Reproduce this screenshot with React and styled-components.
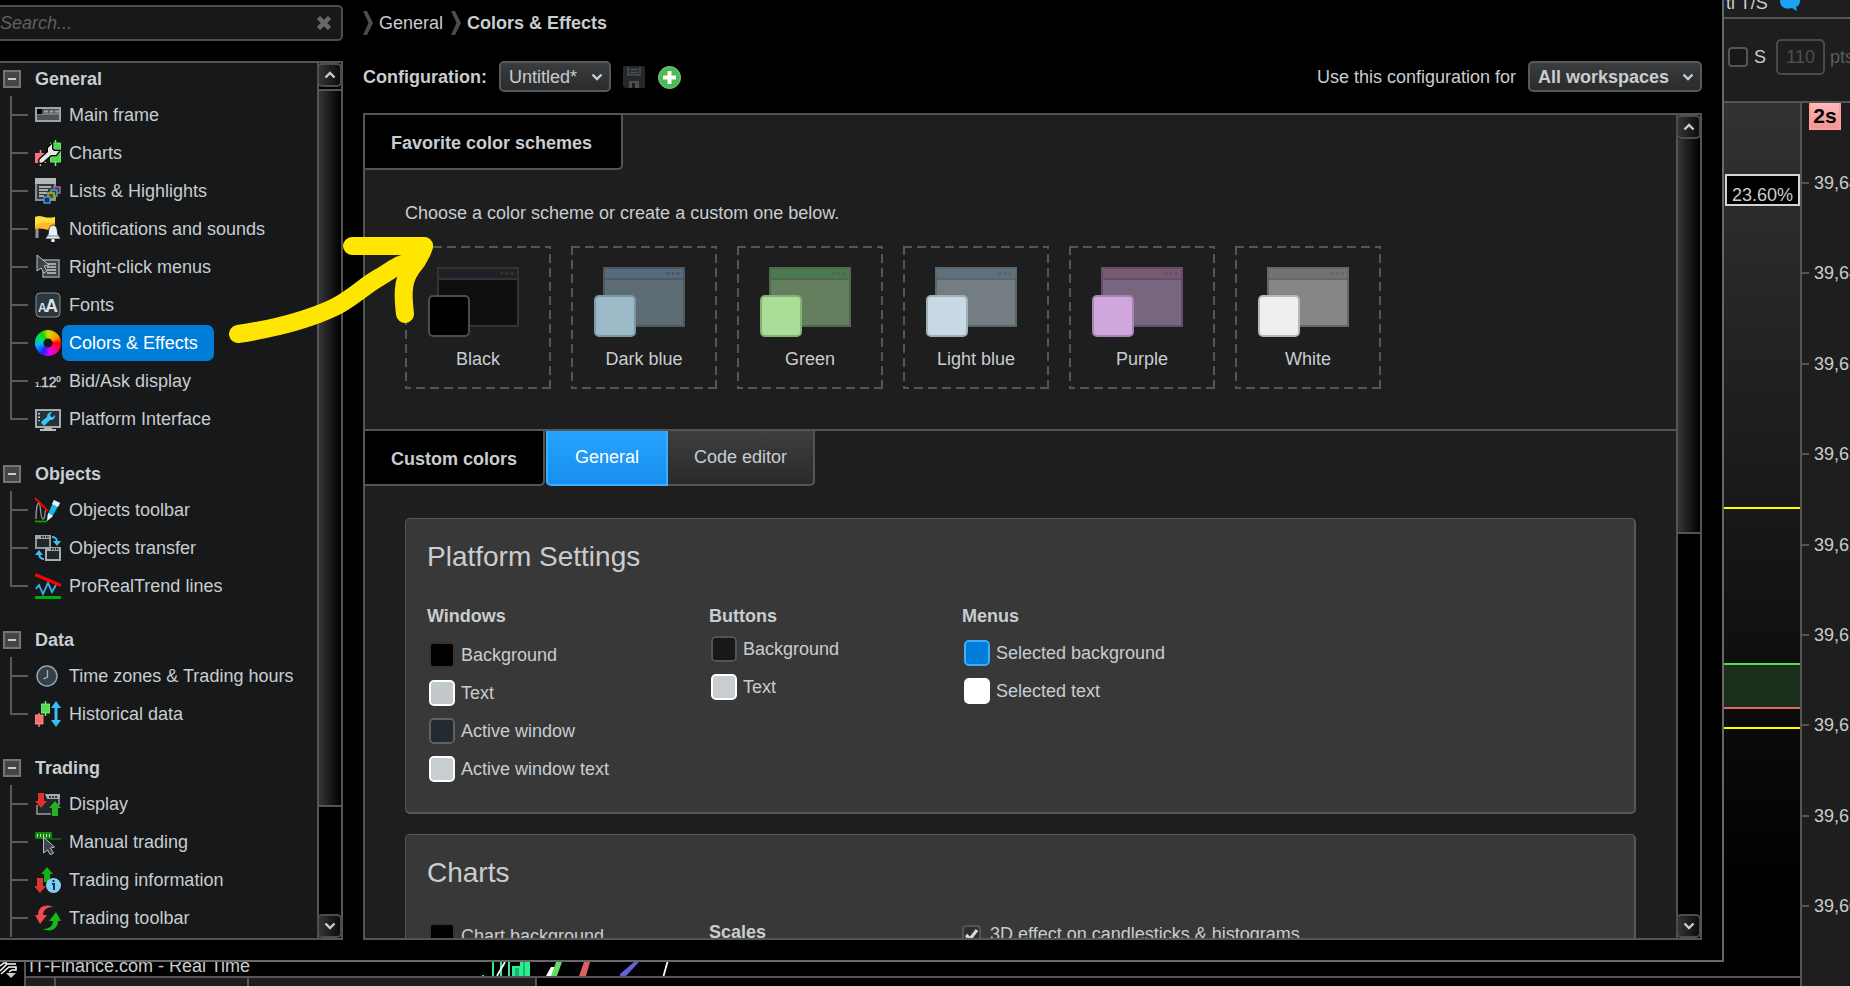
import React from 'react';
import styled, { createGlobalStyle } from 'styled-components';

const GlobalStyle = createGlobalStyle`
  * {
    box-sizing: border-box;
  }
  body {
    margin: 0;
    background: #000000;
    color: #c8cdd0;
    font-family: "Liberation Sans", Arial, sans-serif;
    font-size: 18px;
    line-height: 20px;
    overflow: hidden;
  }
  button, input, select {
    font: inherit;
    color: inherit;
  }
`;

const Screen = styled.div`
  display: grid;
  grid-template-columns: minmax(0, 1fr) 126px;
  height: 100vh;
  overflow: hidden;
`;
const LeftSide = styled.div`
  display: flex;
  flex-direction: column;
  min-height: 0;
`;
const Dialog = styled.div`
  position: relative;
  display: flex;
  gap: 20px;
  flex: 1;
  min-height: 0;
  padding: 0 20px 20px 0;
  border-right: 2px solid #68686a;
  border-bottom: 2px solid #68686a;
  background: #000000;
`;

/* Sidebar */
const Sidebar = styled.nav`
  display: flex;
  flex-direction: column;
  gap: 20px;
  width: 343px;
  padding-top: 5px;
`;
const SearchBox = styled.div`
  display: flex;
  align-items: center;
  height: 36px;
  padding-right: 10px;
  border: 2px solid #4c4c4c;
  border-left: none;
  border-radius: 0 5px 5px 0;
  background: #161819;
`;
const SearchInput = styled.input`
  flex: 1;
  min-width: 0;
  padding: 0;
  border: none;
  outline: none;
  background: none;
  font-style: italic;
  &::placeholder {
    color: #606060;
    opacity: 1;
  }
`;
const IconButton = styled.button`
  display: flex;
  align-items: center;
  justify-content: center;
  padding: 0;
  border: none;
  background: none;
`;
const TreePanel = styled.div`
  display: flex;
  flex: 1;
  min-height: 0;
  border-top: 2px solid #545454;
  border-bottom: 2px solid #545454;
  background: #161819;
`;
const ScrollPane = styled.div`
  flex: 1;
  min-width: 0;
  overflow: hidden;
`;
const Group = styled.section`
  margin-bottom: 18px;
  &:first-child {
    margin: -1px 0 19px;
  }
`;
const GroupHeader = styled.h3`
  display: flex;
  align-items: center;
  gap: 14px;
  height: 34px;
  margin: 0;
  padding-left: 3px;
  font-size: 18px;
  line-height: 20px;
`;
const Toggle = styled.button`
  display: flex;
  align-items: center;
  justify-content: center;
  width: 18px;
  height: 18px;
  padding: 0;
  border: 2px solid #747474;
  background: #464646;
  &::before {
    content: '';
    width: 8px;
    height: 2px;
    background: #c8cdd0;
  }
`;
const TreeList = styled.ul`
  margin: 0;
  padding: 0 0 0 10px;
  list-style: none;
`;
const TreeRow = styled.li`
  display: flex;
  align-items: center;
  height: 38px;
`;
const Branch = styled.span`
  align-self: stretch;
  width: 18px;
  margin-right: 7px;
  background:
    linear-gradient(#5a5a5c, #5a5a5c) left top / 2px ${(p) => (p.$last ? '20px' : '100%')} no-repeat,
    linear-gradient(#5a5a5c, #5a5a5c) left center / 100% 2px no-repeat;
`;
const TreeLink = styled.a`
  padding: 8px 16px 8px 7px;
  margin-left: 1px;
  border-radius: 7px;
  background: ${(p) => (p.$active ? '#007dd9' : 'none')};
  color: ${(p) => (p.$active ? '#ffffff' : 'inherit')};
  text-decoration: none;
  white-space: nowrap;
`;

/* Scrollbar */
const Bar = styled.div`
  display: flex;
  flex-direction: column;
  width: 26px;
  border: solid #545454;
  border-width: 0 2px;
  background: #000000;
`;
const ArrowButton = styled.button`
  display: flex;
  align-items: center;
  justify-content: center;
  height: 24px;
  margin: 0 -1px 0 -2px;
  padding: 0;
  border: 2px solid #4c4c4c;
  border-radius: 5px;
  background: linear-gradient(90deg, #343434, #0c0c0c);
`;
const Track = styled.div`
  flex: 1;
  padding-top: ${(p) => p.$gap}px;
`;
const Thumb = styled.div`
  height: ${(p) => p.$size}%;
  border: solid #545454;
  border-width: ${(p) => (p.$gap ? '2px' : '0')} 0 2px;
  background: linear-gradient(90deg, #353535, #000000);
`;

/* Main column */
const Main = styled.main`
  display: flex;
  flex-direction: column;
  flex: 1;
  min-width: 0;
`;
const Breadcrumb = styled.div`
  display: flex;
  align-items: center;
  gap: 6px;
  height: 46px;
  a {
    margin-right: 2px;
    color: inherit;
    text-decoration: none;
  }
`;
const ConfigRow = styled.div`
  display: flex;
  align-items: center;
  justify-content: space-between;
  height: 31px;
  margin: 15px 0 21px;
`;
const ConfigGroup = styled.div`
  display: flex;
  align-items: center;
  gap: 12px;
  label {
    font-weight: ${(p) => (p.$bold ? 'bold' : 'normal')};
  }
`;
const SelectWrap = styled.div`
  display: grid;
  align-items: center;
  width: ${(p) => p.$width}px;
  > * {
    grid-area: 1 / 1;
  }
  svg {
    justify-self: end;
    margin-right: 8px;
    pointer-events: none;
  }
`;
const Select = styled.select`
  width: 100%;
  height: 31px;
  padding: 0 8px;
  appearance: none;
  border: 2px solid #56585a;
  border-radius: 5px;
  background: linear-gradient(#3b3c3e, #2a2b2d);
  font-weight: ${(p) => (p.$bold ? 'bold' : 'normal')};
`;
const ContentPanel = styled.div`
  display: flex;
  flex: 1;
  min-height: 0;
  border: 2px solid #545454;
  border-right: none;
  background: #1e1e1e;
`;
const TabBar = styled.div`
  display: flex;
`;
const SectionTab = styled.h2`
  display: flex;
  align-items: center;
  width: ${(p) => p.$width}px;
  height: 55px;
  margin: 0 1px 0 0;
  padding: 2px 0 0 26px;
  border: solid #545454;
  border-width: 0 2px 2px 0;
  border-bottom-right-radius: 5px;
  background: #000000;
  font-size: 18px;
`;
const TabButton = styled.button`
  width: ${(p) => p.$width}px;
  height: 55px;
  padding: 0 0 1px;
  border: 2px solid ${(p) => (p.$active ? '#39b0ff' : '#545454')};
  border-top: none;
  border-left-width: ${(p) => (p.$active ? '2px' : '0')};
  border-radius: ${(p) => (p.$active ? '0 0 0 5px' : '0 0 5px 0')};
  background: ${(p) => (p.$active ? 'linear-gradient(#28a3ff, #168fee)' : 'linear-gradient(#3d3e40, #292a2c)')};
  color: ${(p) => (p.$active ? '#ffffff' : 'inherit')};
`;
const Favorites = styled.section`
  padding: 33px 40px 40px;
  border-bottom: 2px solid #545454;
  p {
    margin: 0 0 23px;
  }
`;
const SchemeList = styled.div`
  display: flex;
  gap: 20px;
`;
const dash = (angle) => `repeating-linear-gradient(${angle}, #555555 0 9px, transparent 9px 14px)`;
const SchemeCard = styled.button`
  display: flex;
  flex-direction: column;
  align-items: center;
  gap: 12px;
  width: 146px;
  height: 143px;
  padding: 21px 0 0;
  border: none;
  background:
    ${dash('90deg')} top / 100% 2px no-repeat,
    ${dash('270deg')} bottom / 100% 2px no-repeat,
    ${dash('180deg')} left / 2px 100% no-repeat,
    ${dash('0deg')} right / 2px 100% no-repeat;
`;
const Cards = styled.div`
  display: flex;
  flex-direction: column;
  gap: 20px;
  padding: 32px 40px;
`;
const Card = styled.section`
  padding: 22px 21px 24px;
  border: solid #585858;
  border-width: 1px 2px 2px 1px;
  border-radius: 5px;
  background: #383838;
`;
const CardTitle = styled.h2`
  margin: 0 0 33px;
  font-size: 28px;
  font-weight: normal;
  line-height: 32px;
`;
const CardGrid = styled.div`
  display: grid;
  grid-template-columns: 282px 253px 1fr;
`;
const ColumnTitle = styled.h3`
  margin: 0 0 ${(p) => p.$gap}px;
  font-size: 18px;
  line-height: 20px;
`;
const Field = styled.label`
  display: flex;
  align-items: center;
  gap: 6px;
  height: ${(p) => p.$height || 38}px;
  padding-left: 2px;
`;
const ColorInput = styled.input`
  width: 26px;
  height: 26px;
  padding: 0;
  appearance: none;
  border: 2px solid ${(p) => p.$edge};
  border-radius: 5px;
  background: ${(p) => p.value};
  &::-webkit-color-swatch-wrapper {
    padding: 0;
  }
  &::-webkit-color-swatch {
    border: none;
    border-radius: 2px;
  }
`;
const CheckField = styled.label`
  display: flex;
  align-items: center;
  gap: 9px;
  height: 24px;
`;
const CheckWrap = styled.span`
  display: grid;
  place-items: center;
  > * {
    grid-area: 1 / 1;
  }
  svg {
    pointer-events: none;
  }
`;
const Checkbox = styled.input`
  width: ${(p) => p.$size}px;
  height: ${(p) => p.$size}px;
  margin: 0;
  appearance: none;
  border: 2px solid #545454;
  border-radius: 4px;
  background: ${(p) => p.$fill};
`;

/* Strip below the dialog */
const Strip = styled.footer`
  display: grid;
  grid-template-columns: 24px 1fr;
  height: 24px;
  overflow: hidden;
`;
const StripBody = styled.div`
  border-left: 2px solid #545454;
`;
const StripTitle = styled.div`
  display: flex;
  align-items: flex-end;
  height: 16px;
  border-bottom: 2px solid #545454;
  overflow: hidden;
`;
const StripText = styled.div`
  width: 454px;
  padding-left: 3px;
  line-height: 20px;
  white-space: nowrap;
`;
const StripCells = styled.div`
  display: grid;
  grid-template-columns: 30px 193px 288px;
  height: 8px;
`;
const StripCell = styled.div`
  padding-left: 10px;
  border-right: 2px solid #545454;
  background: #1e1e1e;
`;

/* Chart window behind the dialog */
const ChartWindow = styled.aside`
  display: flex;
  flex-direction: column;
  min-height: 0;
  overflow: hidden;
  background: #1e1e1e;
  white-space: nowrap;
`;
const ChartTop = styled.div`
  display: flex;
  align-items: flex-end;
  gap: 12px;
  height: 19px;
  padding-left: 2px;
  border-bottom: 2px solid #545454;
  overflow: hidden;
`;
const ChartTitle = styled.span`
  line-height: 28px;
`;
const ChartTools = styled.div`
  display: flex;
  align-items: center;
  height: 84px;
  padding: 0 0 6px 4px;
  border-bottom: 2px solid #545454;
  color: #5c5c5c;
  label {
    display: flex;
    align-items: center;
    gap: 6px;
    color: #c8cdd0;
  }
`;
const PointsInput = styled.input`
  width: 49px;
  height: 36px;
  margin: 0 5px 0 10px;
  padding: 0 8px 0 0;
  border: 2px solid #4a4a4a;
  border-radius: 5px;
  background: #1e1e1e;
  color: #4f4f4f;
  text-align: right;
`;
const ChartBody = styled.div`
  display: flex;
  flex: 1;
  min-height: 0;
`;
const PlotColumn = styled.div`
  display: flex;
  flex-direction: column;
  width: 78px;
  border-right: 2px solid #545454;
  background: #000000;
`;
const Plot = styled.div`
  flex: 1;
  padding-top: 71px;
  border-bottom: 2px solid #545454;
  background: linear-gradient(#323232, #000000 90%);
`;
const PlotFoot = styled.div`
  height: 8px;
`;
const Level = styled.div`
  height: 32px;
  margin-left: 1px;
  padding: 9px 0 0 5px;
  border: 2px solid #d4d4d4;
  background: #000000;
  line-height: 20px;
`;
const PriceLine = styled.div`
  height: 2px;
  margin-top: ${(p) => p.$gap}px;
  background: ${(p) => p.$color};
`;
const Zone = styled.div`
  height: 46px;
  border: solid #58d658;
  border-width: 2px 0;
  border-bottom-color: #e06464;
  background: #1b2e1b;
  margin-top: 154px;
`;
const Scale = styled.div`
  display: flex;
  flex-direction: column;
  flex: 1;
  min-width: 0;
  overflow: hidden;
`;
const Timeframe = styled.div`
  width: 32px;
  height: 27px;
  margin-left: 7px;
  border: 2px solid #ff9c9c;
  border-top: none;
  background: linear-gradient(#ffb8b8, #f09494);
  color: #000000;
  font-size: 21px;
  font-weight: bold;
  line-height: 25px;
  text-align: center;
`;
const Ticks = styled.ol`
  display: flex;
  flex-direction: column;
  flex: 1;
  justify-content: space-between;
  margin: 43px 0 70px;
  padding: 0;
  list-style: none;
  li {
    display: flex;
    align-items: center;
    gap: 5px;
    height: 20px;
  }
  li::before {
    content: '';
    flex: none;
    width: 7px;
    height: 2px;
    background: #545454;
  }
`;

/* Hand-drawn pointer lying over the dialog */
const Pointer = styled.svg`
  position: absolute;
  left: 220px;
  top: 220px;
  pointer-events: none;
`;

const Chevron = ({ up }) => (
  <svg width="12" height="8" viewBox="0 0 12 8" fill="none" stroke="#c8cdd0" strokeWidth="2.4">
    <path d={up ? 'M1.5 6.5L6 2l4.5 4.5' : 'M1.5 1.5L6 6l4.5-4.5'} />
  </svg>
);

const CrumbArrow = () => (
  <svg width="10" height="24" viewBox="0 0 10 24" fill="#4c4c4c">
    <path d="M0 0h4l6 12-6 12H0l5.500-12z" />
  </svg>
);

const UP_ARROW = 'M6 0l6 7H9v8H3V7H0z';

const icons = {
  frame: (
    <>
      <rect x="1" y="6" width="24" height="13" fill="#4c5356" stroke="#9ba4a8" strokeWidth="2" />
      <path d="M2 12h22" stroke="#9ba4a8" />
      <rect x="2" y="7" width="5" height="5" fill="#000" />
      <path d="M9 9.500h15" stroke="#9ba4a8" strokeWidth="2" strokeDasharray="4 1.500" />
    </>
  ),
  charts: (
    <>
      <path d="M5.500 10v16" stroke="#ff8b8b" strokeWidth="1.500" />
      <path d="M0 13h11v10H0z" fill="#f07878" />
      <path d="M20.500 0v26" stroke="#7df07d" strokeWidth="1.500" />
      <path d="M15.500 3h10v19h-10z" fill="#4ed54e" stroke="#6ee96e" />
      <path d="M5 19l8-7V8l4-4v5l2 2h5l-3 4h-5l-8 7c-2 2-5 0-3-3z" fill="#e6e6e6" stroke="#000" strokeWidth="2.500" paintOrder="stroke" />
    </>
  ),
  lists: (
    <>
      <path d="M1 5v17h19V5" fill="#33393c" stroke="#868e92" strokeWidth="2" />
      <path d="M0 0h21v6H0z" fill="#b2b8bb" />
      <path d="M4 9h12M4 12h9M4 15h8M4 18h5" stroke="#d0d4d6" strokeWidth="1.500" />
      <rect x="19" y="9" width="6" height="6" fill="#4b2b55" stroke="#9f67ae" strokeWidth="1.500" />
      <rect x="16" y="12" width="6" height="6" fill="#1f4c4c" stroke="#4fa39c" strokeWidth="1.500" />
      <rect x="13" y="15" width="6" height="6" fill="#555018" stroke="#b3aa3c" strokeWidth="1.500" />
      <rect x="9" y="19" width="6" height="6" fill="#14365e" stroke="#4f8fd6" strokeWidth="1.500" />
    </>
  ),
  notifications: (
    <>
      <path d="M2 10v12" stroke="#8d9498" strokeWidth="3" />
      <path d="M0 1c7-3 10 3 20 0v12c-8 3-11-2-20 0z" fill="#ffb929" />
      <path d="M0 1c7-3 10 3 20 0v5C12 9 8 3 0 10z" fill="#ffde3c" />
      <path d="M18 9c-5 1-4 6-5 10l-3 4h16l-3-4c-1-4 0-9-5-10z" fill="#e6eef6" stroke="#161819" strokeWidth=".8" />
      <path d="M12 20h12" stroke="#7d8a96" />
      <circle cx="18" cy="24.500" r="1.800" fill="#e6eef6" />
    </>
  ),
  menus: (
    <>
      <rect x="8" y="6" width="16" height="17" fill="#3b4146" stroke="#92999d" strokeWidth="1.500" />
      <path d="M12 10h9M12 13h9M12 16h9M12 19h9" stroke="#c4cacd" strokeWidth="1.500" />
      <path d="M2 1v16l4-3 3 5 3-2-3-5 5-1z" fill="#3c444b" stroke="#bac1c6" />
    </>
  ),
  fonts: (
    <>
      <rect x="1" y="1" width="24" height="24" rx="4" fill="#2c3740" stroke="#828d95" />
      <text x="3" y="20" fontSize="12" fontWeight="bold" fill="#dde2e5">A</text>
      <text x="10" y="20" fontSize="18" fontWeight="bold" fill="#dde2e5">A</text>
    </>
  ),
  bidask: (
    <>
      <text x="0" y="19" fontSize="8" fontWeight="bold" fill="#c8cdd0">1.</text>
      <text x="6" y="19" fontSize="14" fill="#c8cdd0" stroke="#c8cdd0" strokeWidth=".4">12</text>
      <text x="21" y="14" fontSize="9" fontWeight="bold" fill="#c8cdd0">0</text>
    </>
  ),
  platform: (
    <>
      <rect x="1" y="4" width="24" height="17" fill="#26323a" stroke="#a6aaad" strokeWidth="2" />
      <path d="M4 7v8" stroke="#c8cdd0" strokeWidth="2" strokeDasharray="1.500 2" />
      <path d="M9 22h8v1h4v2H5v-2h4z" fill="#b8bcbe" />
      <path d="M7 18c-1-1-1-2 0-3l5-4c0-3 2-5 5-5l-2 3 1 2h2l2-2c0 4-2 5-5 5l-5 5c-1 1-2 0-3-1z" fill="#42c3f7" />
    </>
  ),
  toolbar: (
    <>
      <path d="M1 22c0-9 1-16 3-16s1 16 4 16 1-8 3-9" fill="none" stroke="#9a9a9a" strokeWidth="1.300" />
      <path d="M0 1l13 13" stroke="#ff0000" strokeWidth="1.800" />
      <path d="M0 24.500h12" stroke="#00a800" strokeWidth="1.800" />
      <path d="M19 3l6 3-8 14-5 4 1-7z" fill="#18b9e8" />
      <path d="M19 3l6 3-2 4-6-3zM13 16l5 3-6 5z" fill="#e8f6fa" />
    </>
  ),
  transfer: (
    <>
      <path d="M1 1h14v12H1z" fill="#20282d" stroke="#8e9699" strokeWidth="2" />
      <path d="M0 0h16v4H0z" fill="#a0a7aa" />
      <path d="M11 13h14v12H11z" fill="#20282d" stroke="#a6adb0" strokeWidth="2" />
      <path d="M10 12h16v4H10z" fill="#a0a7aa" />
      <path d="M6 2h8M16 14h8" stroke="#20282d" strokeWidth="2" strokeDasharray="1.500 1" />
      <path d="M17 2c4 0 5 2 5 6M9 24c-4 0-5-2-5-6" fill="none" stroke="#3cc2f5" strokeWidth="2" />
      <path d="M18 6h8l-4 5zM0 20h8l-4-5z" fill="#3cc2f5" />
    </>
  ),
  trend: (
    <>
      <path d="M1 16l3-4 4 9 5-11 4 9 4-7" fill="none" stroke="#3cb4f0" strokeWidth="1.800" />
      <path d="M1 2l24 10" stroke="#ff0000" strokeWidth="3" strokeLinecap="round" />
      <path d="M1 24.500h24" stroke="#00b000" strokeWidth="3" strokeLinecap="round" />
    </>
  ),
  clock: (
    <>
      <circle cx="12" cy="13" r="10" fill="#33404a" stroke="#97a2aa" strokeWidth="1.500" />
      <path d="M12.500 7v7l-4 2" fill="none" stroke="#aab3b9" strokeWidth="1.300" />
    </>
  ),
  history: (
    <>
      <path d="M4 12v14" stroke="#f08080" strokeWidth="1.500" />
      <rect y="14" width="8" height="9" fill="#f56f6f" stroke="#ff9d9d" strokeWidth=".8" />
      <path d="M10.500 0v15" stroke="#6de86d" strokeWidth="1.500" />
      <rect x="6.500" y="3" width="8" height="9" fill="#54dc54" stroke="#90f590" strokeWidth=".8" />
      <path d="M21 0l5 7h-3.500v12H26l-5 7-5-7h3.500V7H16z" fill="#34c0f4" />
    </>
  ),
  display: (
    <>
      <path d="M11 4h13v10M2 14v9h14" fill="none" stroke="#999fa3" strokeWidth="1.500" />
      <path d="M4 8h19v14H4z" fill="#22282c" />
      <path d="M10 3h15v5H12z" fill="#a3a9ad" />
      <path d="M14 6h9" stroke="#333333" strokeWidth="2" strokeDasharray="2 1" />
      <path d={UP_ARROW} transform="translate(12 17) rotate(180)" fill="#e03030" />
      <path d={UP_ARROW} transform="translate(14 10)" fill="#22b522" />
    </>
  ),
  manual: (
    <>
      <rect y="3" width="17" height="7" rx="1" fill="#0f8a0f" />
      <path d="M15 10h11" stroke="#0d6f0d" strokeWidth="1.500" />
      <path d="M2 6.500h13" stroke="#b8e4b8" strokeWidth="3" strokeDasharray="1 2" />
      <path d="M8.500 8v16l4-3 3 5 3-2-3-5 4-1z" fill="#3f464c" stroke="#b9c0c5" />
    </>
  ),
  info: (
    <>
      <path d={UP_ARROW} transform="translate(6 0)" fill="#18b018" />
      <path d={UP_ARROW} transform="translate(11 26) rotate(180)" fill="#e03535" />
      <circle cx="18.500" cy="18.500" r="7.500" fill="#82cff5" />
      <path d="M17 17h2v6M18.500 13v2" fill="none" stroke="#103650" strokeWidth="2" />
    </>
  ),
  cycle: (
    <>
      <path d="M18 2C9-2 3 3 3 10H0l5 9 7-9H8c0-5 4-8 10-8z" fill="#f04a4a" />
      <path d="M8 24c9 4 15-1 15-8h3l-5-9-7 9h4c0 5-4 8-10 8z" fill="#18b818" />
    </>
  ),
};

// Hue ring with a dark hole in the middle
const ColorWheel = styled.span`
  flex: none;
  width: 26px;
  height: 26px;
  border-radius: 50%;
  background:
    radial-gradient(#161819 0 4px, transparent 5px),
    conic-gradient(#c8e000, #ff9000 60deg, #ff0000 90deg, #ff00a0 135deg, #d000ff 175deg, #2020ff 210deg, #00b8ff 260deg, #00e060 300deg, #20d000 330deg, #c8e000);
`;

const TreeIcon = ({ name }) => {
  if (name === 'wheel') {
    return <ColorWheel />;
  }
  return (
    <svg width="26" height="26" viewBox="0 0 26 26">
      {icons[name]}
    </svg>
  );
};

// "open" keeps the branch line running down past the last visible row
const tree = [
  {
    title: 'General',
    items: [
      ['frame', 'Main frame'],
      ['charts', 'Charts'],
      ['lists', 'Lists & Highlights'],
      ['notifications', 'Notifications and sounds'],
      ['menus', 'Right-click menus'],
      ['fonts', 'Fonts'],
      ['wheel', 'Colors & Effects'],
      ['bidask', 'Bid/Ask display'],
      ['platform', 'Platform Interface'],
    ],
  },
  {
    title: 'Objects',
    items: [
      ['toolbar', 'Objects toolbar'],
      ['transfer', 'Objects transfer'],
      ['trend', 'ProRealTrend lines'],
    ],
  },
  {
    title: 'Data',
    items: [
      ['clock', 'Time zones & Trading hours'],
      ['history', 'Historical data'],
    ],
  },
  {
    title: 'Trading',
    open: true,
    items: [
      ['display', 'Display'],
      ['manual', 'Manual trading'],
      ['info', 'Trading information'],
      ['cycle', 'Trading toolbar'],
    ],
  },
];

const schemes = [
  { name: 'Black', bar: '#1e2226', body: '#0f0f0f', edge: '#333333', chip: '#000000', chipEdge: '#4c4c4c' },
  { name: 'Dark blue', bar: '#566b80', body: '#5c6c72', edge: '#4c5960', chip: '#9bb9c7', chipEdge: '#7c98a5' },
  { name: 'Green', bar: '#4b7951', body: '#647f5e', edge: '#50684c', chip: '#aadd98', chipEdge: '#84b174' },
  { name: 'Light blue', bar: '#5e707c', body: '#747d82', edge: '#5b666c', chip: '#c8dae3', chipEdge: '#9fb0b8' },
  { name: 'Purple', bar: '#7b5970', body: '#78657f', edge: '#625068', chip: '#cfa7dc', chipEdge: '#a884b4' },
  { name: 'White', bar: '#727272', body: '#868686', edge: '#666666', chip: '#efefef', chipEdge: '#b8b8b8' },
];

const prices = ['39,645', '39,640', '39,635', '39,630', '39,625', '39,620', '39,615', '39,610', '39,605'];

const SchemeArt = ({ scheme }) => (
  <svg width="100" height="70" viewBox="0 0 100 70">
    <rect x="10" y="1" width="80" height="58" fill={scheme.body} stroke={scheme.edge} strokeWidth="2" />
    <rect x="11" y="2" width="78" height="9" fill={scheme.bar} />
    <path d="M10 12h80" stroke={scheme.edge} strokeWidth="2" />
    <g fill={scheme.edge}>
      <circle cx="74" cy="6.500" r="1.700" />
      <circle cx="79" cy="6.500" r="1.700" />
      <circle cx="84" cy="6.500" r="1.700" />
    </g>
    <rect x="1" y="29" width="40" height="40" rx="4" fill={scheme.chip} stroke={scheme.chipEdge} strokeWidth="2" />
  </svg>
);

const Scrollbar = ({ size, gap = 0 }) => (
  <Bar>
    <ArrowButton aria-label="Scroll up"><Chevron up /></ArrowButton>
    <Track $gap={gap}><Thumb $size={size} $gap={gap} /></Track>
    <ArrowButton aria-label="Scroll down"><Chevron /></ArrowButton>
  </Bar>
);

const ColorField = ({ label, value, edge, height }) => (
  <Field $height={height}>
    <ColorInput type="color" value={value} $edge={edge} onChange={() => {}} />
    {label}
  </Field>
);

const SideTree = () => (
  <Sidebar>
    <SearchBox>
      <SearchInput type="text" placeholder="Search..." aria-label="Search" />
      <IconButton aria-label="Clear search">
        <svg width="14" height="14" viewBox="0 0 14 14" stroke="#686868" strokeWidth="4.500">
          <path d="M1.500 1.500l11 11M12.500 1.500l-11 11" />
        </svg>
      </IconButton>
    </SearchBox>
    <TreePanel>
      <ScrollPane>
        {tree.map((group) => (
          <Group key={group.title}>
            <GroupHeader>
              <Toggle aria-label={`Collapse ${group.title}`} />
              {group.title}
            </GroupHeader>
            <TreeList>
              {group.items.map(([icon, label], i) => (
                <TreeRow key={label}>
                  <Branch $last={!group.open && i === group.items.length - 1} />
                  <TreeIcon name={icon} />
                  <TreeLink href="#" $active={icon === 'wheel'}>{label}</TreeLink>
                </TreeRow>
              ))}
            </TreeList>
          </Group>
        ))}
      </ScrollPane>
      <Scrollbar size={87} gap={2} />
    </TreePanel>
  </Sidebar>
);

const ConfigBar = () => (
  <ConfigRow>
    <ConfigGroup $bold>
      <label htmlFor="configuration">Configuration:</label>
      <SelectWrap $width={112}>
        <Select id="configuration"><option>Untitled*</option></Select>
        <Chevron />
      </SelectWrap>
      <IconButton aria-label="Save">
        <svg width="22" height="22" viewBox="0 0 22 22">
          <path d="M0 0h22v22H2l-2-2z" fill="#24282b" />
          <path d="M5 1v8h12V1M7 3.500h8M7 6.500h8" fill="none" stroke="#4c5053" strokeWidth="1.500" />
          <path d="M6 22v-7h10v7" fill="#4c5053" />
          <path d="M9 17h3v5H9z" fill="#1b1e20" />
        </svg>
      </IconButton>
      <IconButton aria-label="Add configuration">
        <svg width="24" height="24" viewBox="0 0 24 24">
          <circle cx="12.500" cy="12.500" r="11" fill="#4fb955" stroke="#6fd673" />
          <path d="M12.500 6v13M6 12.500h13" stroke="#ffffff" strokeWidth="4" />
        </svg>
      </IconButton>
    </ConfigGroup>
    <ConfigGroup>
      <label htmlFor="scope">Use this configuration for</label>
      <SelectWrap $width={174}>
        <Select id="scope" $bold><option>All workspaces</option></Select>
        <Chevron />
      </SelectWrap>
    </ConfigGroup>
  </ConfigRow>
);

const ColorSettings = () => (
  <Cards>
    <Card>
      <CardTitle>Platform Settings</CardTitle>
      <CardGrid>
        <div>
          <ColumnTitle $gap={10}>Windows</ColumnTitle>
          <ColorField label="Background" value="#000000" edge="#333333" />
          <ColorField label="Text" value="#c3c8cb" edge="#ffffff" />
          <ColorField label="Active window" value="#232a30" edge="#596268" />
          <ColorField label="Active window text" value="#c8cdd0" edge="#ffffff" />
        </div>
        <div>
          <ColumnTitle $gap={4}>Buttons</ColumnTitle>
          <ColorField label="Background" value="#161819" edge="#545454" />
          <ColorField label="Text" value="#c8cdd0" edge="#ffffff" />
        </div>
        <div>
          <ColumnTitle $gap={8}>Menus</ColumnTitle>
          <ColorField label="Selected background" value="#007dd9" edge="#39b0ff" />
          <ColorField label="Selected text" value="#ffffff" edge="#ffffff" />
        </div>
      </CardGrid>
    </Card>
    <Card>
      <CardTitle>Charts</CardTitle>
      <CardGrid>
        <div>
          <ColorField label="Chart background" value="#000000" edge="#333333" height={28} />
        </div>
        <ColumnTitle $gap={4}>Scales</ColumnTitle>
        <CheckField>
          <CheckWrap>
            <Checkbox type="checkbox" defaultChecked $size={19} $fill="#2d2e30" />
            <svg width="15" height="13" viewBox="0 0 15 13" fill="none" stroke="#d4d8da" strokeWidth="3.200">
              <path d="M2 7l4 4 7-9" />
            </svg>
          </CheckWrap>
          3D effect on candlesticks &amp; histograms
        </CheckField>
      </CardGrid>
    </Card>
  </Cards>
);

const StatusStrip = () => (
  <Strip>
    <svg width="24" height="24" viewBox="0 0 24 24" fill="none" stroke="#ffffff" strokeWidth="1.500">
      <path d="M0 4l4-3h3M0 9l7-7h9M1 12l8-7h7v3h-4l-3 2" />
      <path d="M6 11h10l-5 5z" fill="#c8cdd0" stroke="none" />
    </svg>
    <StripBody>
      <StripTitle>
        <StripText>IT-Finance.com - Real Time</StripText>
        <svg width="200" height="14" viewBox="0 0 200 14">
          <path d="M2 13h2v1H2zM12 0h2v14h-2zM20 0h2v14h-2zM28 0h2v14h-2zM32 4h8V0h10v14H32z" fill="#2eeb95" />
          <path d="M35 6h4v8h-4zM43 0h2v14h-2z" fill="#12bb6c" />
          <path d="M17 14l8-14M183.500 14l4-14" stroke="#ffffff" strokeWidth="1.800" />
          <path d="M66 14l5-9h4l-3 9z" fill="#ffffff" />
          <path d="M71 14l5-14h6l-5 14z" fill="#62dc62" />
          <path d="M99 14l5-14h6l-4 14z" fill="#dc6262" />
          <path d="M140 14v-2l14-12h5l-13 14z" fill="#6262dc" />
        </svg>
      </StripTitle>
      <StripCells>
        <StripCell>
          <svg width="13" height="8" viewBox="0 0 13 8">
            <rect y="2" width="13" height="10" rx="3" fill="#8a9094" />
            <path d="M3 7h7" stroke="#26282a" strokeWidth="1.500" />
          </svg>
        </StripCell>
        <StripCell />
        <StripCell />
      </StripCells>
    </StripBody>
  </Strip>
);

const BackgroundChart = () => (
  <ChartWindow>
    <ChartTop>
      <ChartTitle>ti T/S</ChartTitle>
      <svg width="20" height="17" viewBox="0 0 20 17">
        <path d="M0 0h20c0 5-2 6-4 7l1 4-5-3C5 10 0 7 0 0z" fill="#1ba4f5" />
      </svg>
    </ChartTop>
    <ChartTools>
      <label>
        <Checkbox type="checkbox" $size={20} $fill="#161819" />
        S
      </label>
      <PointsInput type="text" defaultValue="110" aria-label="Points" />
      pts
    </ChartTools>
    <ChartBody>
      <PlotColumn>
        <Plot>
          <Level>23.60%</Level>
          <PriceLine $gap={301} $color="#ffff00" />
          <Zone />
          <PriceLine $gap={18} $color="#ffff00" />
        </Plot>
        <PlotFoot />
      </PlotColumn>
      <Scale>
        <Timeframe>2s</Timeframe>
        <Ticks>
          {prices.map((price) => (
            <li key={price}>{price}</li>
          ))}
        </Ticks>
      </Scale>
    </ChartBody>
  </ChartWindow>
);

export default function App() {
  return (
    <Screen>
      <GlobalStyle />
      <LeftSide>
        <Dialog>
          <SideTree />
          <Main>
            <Breadcrumb>
              <CrumbArrow />
              <a href="#">General</a>
              <CrumbArrow />
              <strong>Colors &amp; Effects</strong>
            </Breadcrumb>
            <ConfigBar />
            <ContentPanel>
              <ScrollPane>
                <TabBar>
                  <SectionTab $width={258}>Favorite color schemes</SectionTab>
                </TabBar>
                <Favorites>
                  <p>Choose a color scheme or create a custom one below.</p>
                  <SchemeList>
                    {schemes.map((scheme) => (
                      <SchemeCard key={scheme.name}>
                        <SchemeArt scheme={scheme} />
                        {scheme.name}
                      </SchemeCard>
                    ))}
                  </SchemeList>
                </Favorites>
                <TabBar>
                  <SectionTab $width={180}>Custom colors</SectionTab>
                  <TabButton $width={122} $active>General</TabButton>
                  <TabButton $width={147}>Code editor</TabButton>
                </TabBar>
                <ColorSettings />
              </ScrollPane>
              <Scrollbar size={51} />
            </ContentPanel>
          </Main>
          <Pointer width="220" height="130" viewBox="0 0 220 130" fill="none" stroke="#ffe600" strokeWidth="18" strokeLinecap="round" strokeLinejoin="round">
            <path d="M18 114c40-6 74-16 97-27 18-9 30-22 45-30 14-8 20-15 32-14" />
            <path d="M132 26h72c0 0-3 12-13 23-9 12-8 28-6 45" />
            <path d="M204 26l-20 22" />
          </Pointer>
        </Dialog>
        <StatusStrip />
      </LeftSide>
      <BackgroundChart />
    </Screen>
  );
}
